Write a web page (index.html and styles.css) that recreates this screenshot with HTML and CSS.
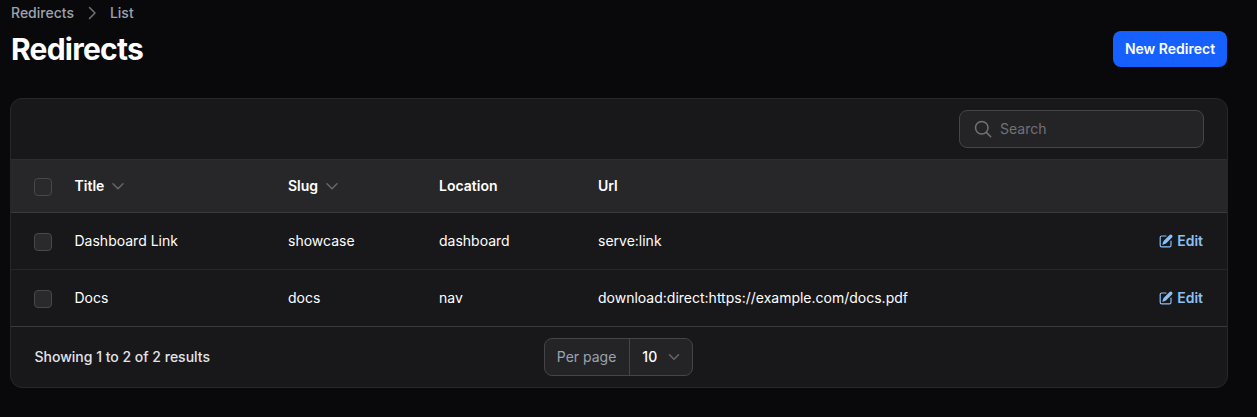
FILE: index.html
```html
<!DOCTYPE html>
<html lang="en">
<head>
<meta charset="utf-8">
<title>Redirects</title>
<link rel="stylesheet" href="styles.css">
</head>
<body>
<main class="page">
  <header class="page-header">
    <div>
      <nav class="crumbs">
        <span>Redirects</span>
        <svg class="crumb-sep" viewBox="0 0 20 20" fill="none" stroke="currentColor" stroke-width="1.5" stroke-linecap="round" stroke-linejoin="round"><path d="M7.5 4.5 13 10l-5.5 5.5"/></svg>
        <span>List</span>
      </nav>
      <h1 class="title">Redirects</h1>
    </div>
    <button class="primary">New Redirect</button>
  </header>
  <section class="card">
    <div class="toolbar">
      <label class="search">
        <svg class="search-icon" viewBox="0 0 20 20" fill="none" stroke="currentColor" stroke-width="1.5" stroke-linecap="round" stroke-linejoin="round"><circle cx="8.75" cy="8.75" r="6.25"/><path d="m13.4 13.4 4.3 4.3"/></svg>
        <span class="placeholder">Search</span>
      </label>
    </div>
    <table class="table">
      <thead>
        <tr>
          <th class="col-check"><span class="check"></span></th>
          <th class="col-title"><span class="sort">Title <svg class="chev" viewBox="0 0 20 20" fill="none" stroke="currentColor" stroke-width="1.8" stroke-linecap="round" stroke-linejoin="round"><path d="m4.5 7.5 5.5 5.5 5.5-5.5"/></svg></span></th>
          <th class="col-slug"><span class="sort">Slug <svg class="chev" viewBox="0 0 20 20" fill="none" stroke="currentColor" stroke-width="1.8" stroke-linecap="round" stroke-linejoin="round"><path d="m4.5 7.5 5.5 5.5 5.5-5.5"/></svg></span></th>
          <th class="col-loc">Location</th>
          <th>Url</th>
          <th class="col-act"></th>
        </tr>
      </thead>
      <tbody>
        <tr>
          <td><span class="check"></span></td>
          <td>Dashboard Link</td>
          <td>showcase</td>
          <td>dashboard</td>
          <td>serve:link</td>
          <td class="act"><a class="edit"><svg class="edit-icon" viewBox="0 0 20 20" fill="currentColor"><path d="m5.433 13.917 1.262-3.155A4 4 0 0 1 7.58 9.42l6.92-6.918a2.121 2.121 0 0 1 3 3l-6.92 6.918c-.383.383-.84.685-1.343.886l-3.154 1.262a.5.5 0 0 1-.65-.65Z"/><path d="M3.5 5.75c0-.69.56-1.25 1.25-1.25H10A.75.75 0 0 0 10 3H4.75A2.75 2.75 0 0 0 2 5.75v9.5A2.75 2.75 0 0 0 4.75 18h9.5A2.75 2.75 0 0 0 17 15.25V10a.75.75 0 0 0-1.5 0v5.25c0 .69-.56 1.25-1.25 1.25h-9.5c-.69 0-1.25-.56-1.25-1.25v-9.5Z"/></svg>Edit</a></td>
        </tr>
        <tr class="last">
          <td><span class="check"></span></td>
          <td>Docs</td>
          <td>docs</td>
          <td>nav</td>
          <td>download:direct:https://example.com/docs.pdf</td>
          <td class="act"><a class="edit"><svg class="edit-icon" viewBox="0 0 20 20" fill="currentColor"><path d="m5.433 13.917 1.262-3.155A4 4 0 0 1 7.58 9.42l6.92-6.918a2.121 2.121 0 0 1 3 3l-6.92 6.918c-.383.383-.84.685-1.343.886l-3.154 1.262a.5.5 0 0 1-.65-.65Z"/><path d="M3.5 5.75c0-.69.56-1.25 1.25-1.25H10A.75.75 0 0 0 10 3H4.75A2.75 2.75 0 0 0 2 5.75v9.5A2.75 2.75 0 0 0 4.75 18h9.5A2.75 2.75 0 0 0 17 15.25V10a.75.75 0 0 0-1.5 0v5.25c0 .69-.56 1.25-1.25 1.25h-9.5c-.69 0-1.25-.56-1.25-1.25v-9.5Z"/></svg>Edit</a></td>
        </tr>
      </tbody>
    </table>
    <footer class="footer">
      <span class="results">Showing 1 to 2 of 2 results</span>
      <div class="perpage">
        <span class="perpage-label">Per page</span>
        <span class="perpage-value">10 <svg class="chev chev-select" viewBox="0 0 20 20" fill="none" stroke="currentColor" stroke-width="1.8" stroke-linecap="round" stroke-linejoin="round"><path d="m5 7.5 5 5 5-5"/></svg></span>
      </div>
      <span class="footer-spacer"></span>
    </footer>
  </section>
</main>
</body>
</html>
```
FILE: styles.css
```css
* { box-sizing: border-box; }
html, body { margin: 0; height: 100%; }
body {
  background: #09090b;
  color: #fff;
  font-family: Inter, "Liberation Sans", sans-serif;
  font-size: 14px;
  line-height: 20px;
  overflow: hidden;
}
.page { padding: 3px 29px 0 10px; }
.page-header {
  display: flex;
  justify-content: space-between;
  align-items: flex-start;
  height: 95px;
}
.crumbs {
  display: flex;
  align-items: center;
  color: #9ca3af;
  height: 20px;
  font-weight: 500;
  font-size: 14px;
  padding-left: 1px;
}
.crumb-sep { width: 20px; height: 20px; margin: 0 8px; color: #71717a; }
.title {
  margin: 8px 0 0 1px;
  font-size: 30px;
  line-height: 36px;
  font-weight: 700;
  letter-spacing: -0.75px;
}
.primary {
  margin: 28px 1px 0 0;
  width: 114px;
  height: 36px;
  border: 0;
  border-radius: 8px;
  background: #1660ff;
  color: #fff;
  font: 600 14px/20px Inter, "Liberation Sans", sans-serif;
  padding: 0;
}
.card {
  background: #18181b;
  border: 1px solid #27272a;
  border-radius: 12px;
  overflow: hidden;
}
.toolbar {
  display: flex;
  justify-content: flex-end;
  height: 60px;
  padding: 11px 23px 0 0;
}
.search {
  display: flex;
  align-items: center;
  width: 245px;
  height: 38px;
  padding-left: 13px;
  background: #242427;
  border: 1px solid #44444a;
  border-radius: 8px;
}
.search-icon { width: 20px; height: 20px; color: #71717a; margin-right: 7px; }
.placeholder { color: #71717a; }
.table { width: 100%; border-collapse: collapse; table-layout: fixed; }
.table th, .table td {
  padding: 0;
  text-align: left;
  vertical-align: middle;
}
.table thead tr { height: 53px; background: #27272a; border-top: 1px solid #2e2e32; }
.table th { font-weight: 600; }
.table tbody tr { height: 57px; border-top: 1px solid #27272a; }
.table tbody tr:first-child { border-top-color: #3a3a3e; }
.table tbody tr.last { height: 56px; }
.col-check { width: 63.5px; padding-left: 23px !important; }
.col-title { width: 213.5px; }
.col-slug { width: 151px; }
.col-loc { width: 159px; }
.col-act { width: 130px; }
.table td:first-child { padding-left: 23px; }
.check {
  display: block;
  width: 18px;
  height: 18px;
  margin-top: 1px;
  border: 1px solid #47474c;
  border-radius: 4px;
  background: #2a2a2d;
}
.sort { display: inline-flex; align-items: center; gap: 5px; }
.chev { width: 18px; height: 18px; color: #63636b; }
.act { text-align: right !important; padding-right: 24px !important; }
.edit {
  display: inline-flex;
  align-items: center;
  gap: 3px;
  padding-top: 2px;
  color: #8cc0f5;
  font-weight: 600;
}
.last .edit { padding-top: 3px; }
.last .check { margin-top: 2px; }
.edit-icon { width: 16px; height: 16px; }
.footer {
  display: flex;
  align-items: center;
  justify-content: space-between;
  height: 61px;
  padding: 0 23px;
  border-top: 1px solid #3a3a3e;
}
.results { width: 176px; color: #e4e4e7; font-weight: 500; margin-left: 0.5px; }
.footer-spacer { width: 176px; margin-left: 0.5px; }
.perpage {
  display: flex;
  height: 38px;
  background: #242427;
  border: 1px solid #44444a;
  border-radius: 8px;
  margin-right: 1px;
}
.perpage-label {
  display: flex;
  align-items: center;
  padding: 0 13px 0 12px;
  color: #9ca3af;
  border-right: 1px solid #44444a;
}
.perpage-value {
  display: flex;
  align-items: center;
  gap: 8px;
  padding: 0 9px 0 12px;
  color: #fff;
  font-weight: 500;
}
.chev-select { width: 18px; height: 18px; }
```
